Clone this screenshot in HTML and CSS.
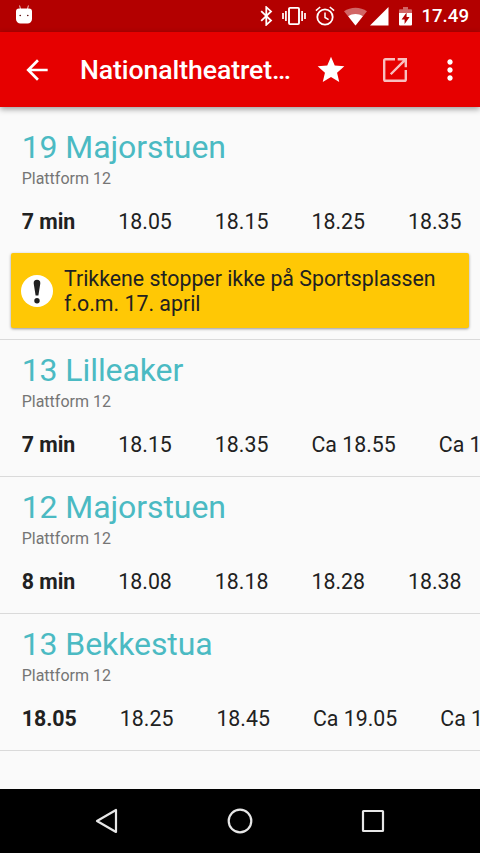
FILE: index.html
```html
<!DOCTYPE html>
<html lang="no">

<head>
    <meta charset="UTF-8">
    <meta name="viewport" content="width=device-width, initial-scale=1.0">
    <title>Nationaltheatret</title>
    <link rel="stylesheet" href="styles.css">
</head>

<body>
    <div class="status-bar">
        <svg class="debug-icon" width="16" height="19" viewBox="0 0 16 19">
            <path d="M3.6 0.5l1 4M12.4 0.5l-1 4" stroke="#fff" stroke-width="1" opacity="0.8" />
            <path d="M3 3.4h10a3 3 0 0 1 3 3v7.600a4.500 4.500 0 0 1-4.500 4.500h-7a4.500 4.500 0 0 1-4.500-4.500v-7.600a3 3 0 0 1 3-3z" fill="#fff" />
            <circle cx="4.200" cy="10.500" r="0.8" fill="#500" />
            <circle cx="11.800" cy="10.500" r="0.8" fill="#500" />
        </svg>
        <div class="status-icons">
            <svg class="bluetooth" width="13" height="20" viewBox="0 0 13 20">
                <path d="M1.200 5.200l9.800 9.400-4.700 4.200V1.200L11 5.400l-9.800 9.400" fill="none" stroke="#fff" stroke-width="1.800" />
            </svg>
            <svg class="vibrate" width="24" height="20" viewBox="0 0 24 20">
                <path d="M1 7v6M3.900 5v10M20.100 5v10M23 7v6" stroke="#fff" stroke-width="1.700" />
                <rect x="7" y="1.900" width="10" height="16.200" rx="1" fill="none" stroke="#fff" stroke-width="1.900" />
            </svg>
            <svg class="alarm" width="20" height="20" viewBox="0 0 20 20">
                <circle cx="10" cy="11" r="7.700" fill="none" stroke="#fff" stroke-width="1.800" />
                <path d="M10 6.500v5l3.600 2.200M0.900 4.600l4.300-3.600M19.100 4.600l-4.300-3.600" fill="none" stroke="#fff" stroke-width="1.500" />
            </svg>
            <svg class="wifi" width="23" height="19" viewBox="0 0 23 19">
                <path d="M11.500 18.500L0 4.300C6.500-0.600 16.500-0.600 23 4.300z" fill="#fff" opacity="0.4" />
                <path d="M11.500 18.500L4.200 9.300c4.400-3.200 10.200-3.200 14.600 0z" fill="#fff" />
            </svg>
            <svg class="signal" width="19" height="19" viewBox="0 0 19 19">
                <path d="M0 18.500L18.500 0v18.500z" fill="#fff" />
            </svg>
            <svg class="battery" width="13" height="19" viewBox="0 0 13 19">
                <path d="M0 6V3.200q0-1 1-1h3V0h5v2.200h3q1 0 1 1V6z" fill="#fff" opacity="0.4" />
                <path d="M0 6h13v11.500q0 1-1 1H1q-1 0-1-1zM7.600 5.500L2.600 12.600h3v4.500l5-7h-3z" fill="#fff" fill-rule="evenodd" />
            </svg>
            <span class="clock">17.49</span>
        </div>
    </div>

    <header class="toolbar">
        <svg class="back" width="32" height="32" viewBox="0 0 24 24">
            <path d="M20 11H7.830l5.590-5.590L12 4l-8 8 8 8 1.410-1.410L7.830 13H20v-2z" />
        </svg>
        <h1>Nationaltheatret…</h1>
        <svg class="star" width="32" height="32" viewBox="0 0 24 24">
            <path d="M12 17.270L18.180 21l-1.640-7.030L22 9.240l-7.190-.61L12 2 9.190 8.630 2 9.240l5.460 4.730L5.820 21z" />
        </svg>
        <svg class="open" width="32" height="32" viewBox="0 0 24 24">
            <path d="M12 3.900H4.900q-1 0-1 1v14.200q0 1 1 1h14.200q1 0 1-1V12M14 3.900h6.100v6.100M20.100 3.900L8.800 15.200" />
        </svg>
        <svg class="more" width="32" height="32" viewBox="0 0 24 24">
            <path d="M12 8c1.100 0 2-.9 2-2s-.9-2-2-2-2 .9-2 2 .9 2 2 2zm0 2c-1.100 0-2 .9-2 2s.9 2 2 2 2-.9 2-2-.9-2-2-2zm0 6c-1.100 0-2 .9-2 2s.9 2 2 2 2-.9 2-2-.9-2-2-2z" />
        </svg>
    </header>

    <main class="departures">
        <section class="line">
            <h2>19 Majorstuen</h2>
            <p class="platform">Plattform 12</p>
            <div class="times">
                <strong>7 min</strong>
                <span>18.05</span>
                <span>18.15</span>
                <span>18.25</span>
                <span>18.35</span>
            </div>
            <div class="alert">
                <svg width="32" height="32" viewBox="0 0 32 32">
                    <circle cx="16" cy="16" r="16" fill="#fff" />
                    <path d="M16 4.800c2.300 0 3.500 1.300 3.300 3.600L17.400 20.500h-2.800L12.700 8.400c-.2-2.300 1-3.600 3.300-3.600z" fill="#212121" />
                    <circle cx="16" cy="25.700" r="2.700" fill="#212121" />
                </svg>
                <p>Trikkene stopper ikke på Sportsplassen f.o.m. 17. april</p>
            </div>
        </section>

        <section class="line">
            <h2>13 Lilleaker</h2>
            <p class="platform">Plattform 12</p>
            <div class="times">
                <strong>7 min</strong>
                <span>18.15</span>
                <span>18.35</span>
                <span>Ca 18.55</span>
                <span>Ca 19.15</span>
            </div>
        </section>

        <section class="line">
            <h2>12 Majorstuen</h2>
            <p class="platform">Plattform 12</p>
            <div class="times">
                <strong>8 min</strong>
                <span>18.08</span>
                <span>18.18</span>
                <span>18.28</span>
                <span>18.38</span>
            </div>
        </section>

        <section class="line">
            <h2>13 Bekkestua</h2>
            <p class="platform">Plattform 12</p>
            <div class="times">
                <strong>18.05</strong>
                <span>18.25</span>
                <span>18.45</span>
                <span>Ca 19.05</span>
                <span>Ca 19.25</span>
            </div>
        </section>
    </main>

    <nav class="nav-bar">
        <svg width="28" height="28" viewBox="0 0 28 28">
            <path d="M4 14L23 3v22z" />
        </svg>
        <svg width="28" height="28" viewBox="0 0 28 28">
            <circle cx="14" cy="14" r="11.300" />
        </svg>
        <svg width="28" height="28" viewBox="0 0 28 28">
            <rect x="4" y="4" width="20" height="20" rx="0.5" />
        </svg>
    </nav>
</body>

</html>
```
FILE: styles.css
```css
* {
    box-sizing: border-box;
}

body {
    font-family: Roboto, sans-serif;
    margin: 0;
    height: 853px;
    display: flex;
    flex-direction: column;
    background-color: #fafafa;
    color: #212121;
    overflow: hidden;
}

h1,
h2,
p {
    margin: 0;
    font-weight: 400;
}

svg {
    display: block;
    flex: none;
}

.status-bar {
    height: 32px;
    flex: none;
    display: flex;
    align-items: center;
    justify-content: space-between;
    padding: 0 11px 0 16px;
    background-color: #b30000;
    color: white;
}

.debug-icon {
    margin-top: -3px;
}

.status-icons {
    display: flex;
    align-items: center;
}

.vibrate {
    margin-left: 9px;
}

.alarm {
    margin-left: 9px;
}

.wifi {
    margin-left: 9px;
}

.signal {
    margin-left: 3px;
}

.battery {
    margin-left: 10px;
}

.clock {
    margin-left: 9px;
    font-size: 18.67px;
    font-weight: 500;
    line-height: 32px;
}

.toolbar {
    height: 75px;
    flex: none;
    display: flex;
    align-items: center;
    padding: 0 13px 0 21px;
    background-color: #e60000;
    color: white;
    box-shadow: 0 2px 6px rgba(0, 0, 0, 0.4);
}

.toolbar svg {
    fill: white;
}

.toolbar h1 {
    width: 214px;
    margin-left: 27px;
    font-size: 26.67px;
    font-weight: 500;
    letter-spacing: -0.1px;
    white-space: nowrap;
}

.toolbar .star {
    margin-left: 21px;
}

.toolbar .open {
    margin-left: 32px;
    fill: none;
    stroke: white;
    stroke-width: 1.8;
    opacity: 0.75;
}

.toolbar .more {
    margin-left: 23px;
}

.departures {
    flex: 1;
    padding-top: 10px;
}

.line {
    padding: 11px 11px 18px;
    border-bottom: 1px solid #dadada;
}

.line:first-child {
    padding-bottom: 11px;
}

.line h2 {
    margin-left: 10.67px;
    font-size: 32px;
    letter-spacing: -0.08px;
    line-height: 38px;
    color: #4bbac3;
}

.platform {
    margin: 3px 0 0 10.67px;
    font-size: 16px;
    line-height: 19px;
    color: #757575;
}

.times {
    display: flex;
    gap: 43px;
    margin: 21px -11px 0 10.67px;
    font-size: 21.33px;
    line-height: 26px;
    white-space: nowrap;
    overflow: hidden;
}

.times strong {
    font-weight: 700;
}

.alert {
    display: flex;
    align-items: center;
    gap: 11px;
    height: 75px;
    margin-top: 18px;
    padding: 0 10px;
    background-color: #ffc805;
    border-radius: 2px;
    box-shadow: 0 1px 3px rgba(0, 0, 0, 0.4);
    font-size: 21.33px;
    line-height: 25px;
}

.nav-bar {
    height: 64px;
    flex: none;
    display: flex;
    align-items: center;
    justify-content: center;
    gap: 105px;
    background-color: black;
}

.nav-bar svg {
    fill: none;
    stroke: #e6e6e6;
    stroke-width: 2.2;
    stroke-linejoin: round;
}
```
